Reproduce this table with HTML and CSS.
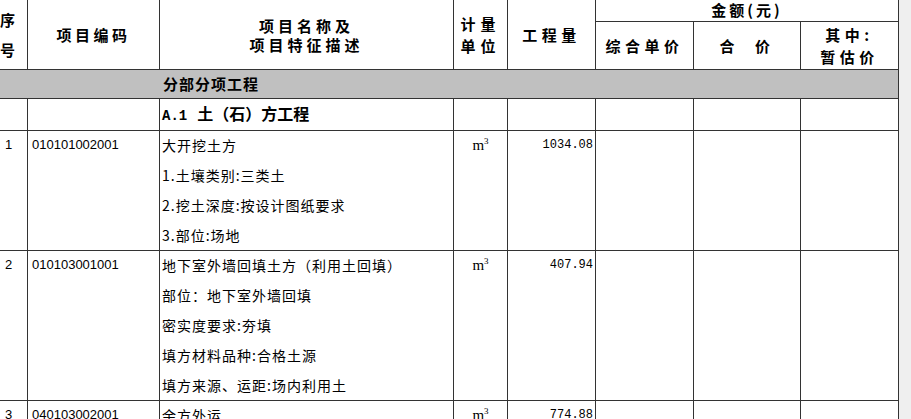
FILE: index.html
```html
<!DOCTYPE html>
<html lang="zh-CN">
<head>
<meta charset="utf-8">
<title>分部分项工程量清单</title>
<link rel="stylesheet" href="styles.css">
</head>
<body>
<div class="page">
  <div class="viewport">
    <table class="sheet">
      <colgroup>
        <col class="c-no"><col class="c-code"><col class="c-desc"><col class="c-unit">
        <col class="c-qty"><col class="c-price"><col class="c-total"><col class="c-est">
      </colgroup>
      <thead>
        <tr class="h1">
          <th rowspan="2" class="hd hd-no">序<br>号</th>
          <th rowspan="2" class="hd hd-code">项目编码</th>
          <th rowspan="2" class="hd hd-desc">项目名称及<br>项目特征描述</th>
          <th rowspan="2" class="hd hd-unit">计量<br>单位</th>
          <th rowspan="2" class="hd hd-qty">工程量</th>
          <th colspan="3" class="hd hd-money">金额(元)</th>
        </tr>
        <tr class="h2">
          <th class="hd hd-sub">综合单价</th>
          <th class="hd hd-sub">合&nbsp;&nbsp;价</th>
          <th class="hd hd-est">其中:<br>暂估价</th>
        </tr>
      </thead>
      <tbody>
        <tr class="r-group">
          <td colspan="8" class="group">分部分项工程</td>
        </tr>
        <tr class="r-sec">
          <td></td><td></td>
          <td class="sec"><span class="sec-code">A.1</span>土（石）方工程</td>
          <td></td><td></td><td></td><td></td><td></td>
        </tr>
        <tr class="r-item">
          <td class="no">1</td>
          <td class="code">010101002001</td>
          <td class="desc">
            <div class="ln">大开挖土方</div>
            <div class="ln">1.土壤类别:三类土</div>
            <div class="ln">2.挖土深度:按设计图纸要求</div>
            <div class="ln">3.部位:场地</div>
          </td>
          <td class="unit">m<sup>3</sup></td>
          <td class="qty">1034.08</td>
          <td></td><td></td><td></td>
        </tr>
        <tr class="r-item">
          <td class="no">2</td>
          <td class="code">010103001001</td>
          <td class="desc">
            <div class="ln">地下室外墙回填土方（利用土回填）</div>
            <div class="ln">部位：地下室外墙回填</div>
            <div class="ln">密实度要求:夯填</div>
            <div class="ln">填方材料品种:合格土源</div>
            <div class="ln">填方来源、运距:场内利用土</div>
          </td>
          <td class="unit">m<sup>3</sup></td>
          <td class="qty">407.94</td>
          <td></td><td></td><td></td>
        </tr>
        <tr class="r-item">
          <td class="no">3</td>
          <td class="code">040103002001</td>
          <td class="desc">
            <div class="ln">余方外运</div>
          </td>
          <td class="unit">m<sup>3</sup></td>
          <td class="qty">774.88</td>
          <td></td><td></td><td></td>
        </tr>
      </tbody>
    </table>
  </div>
  <div class="strip"></div>
</div>
</body>
</html>
```
FILE: styles.css
```css
html, body {
  margin: 0;
  padding: 0;
  background: #ffffff;
}

.page {
  display: flex;
  width: 911px;
  height: 419px;
  overflow: hidden;
}

.viewport {
  width: 899px;
  height: 419px;
  overflow: hidden;
  flex: none;
}

.strip {
  flex: 1;
  background: #efefef;
}

.sheet {
  border-collapse: collapse;
  table-layout: fixed;
  width: 899px;
  margin: -1px 0 0 -1px;
  font-family: "Noto Sans CJK SC", "Liberation Sans", sans-serif;
  color: #000;
}

.sheet th,
.sheet td {
  border: 1px solid #333;
  padding: 0;
}

.c-no { width: 28px; }
.c-code { width: 132px; }
.c-desc { width: 294px; }
.c-unit { width: 54px; }
.c-qty { width: 88px; }
.c-price { width: 98px; }
.c-total { width: 107px; }
.c-est { width: 98px; }

/* header */
.h1 { height: 22px; }
.h2 { height: 48px; }

.hd {
  font-weight: 700;
  font-size: 15px;
  text-align: center;
  vertical-align: middle;
  line-height: 20px;
}

.hd-no {
  text-align: left;
  padding-left: 2px;
  line-height: 30px;
  letter-spacing: 0;
}

.hd-code { letter-spacing: 3.5px; padding-left: 3px; }

.hd-desc {
  letter-spacing: 4px;
  line-height: 19px;
  padding-bottom: 4px;
  padding-left: 4px;
}

.hd-unit {
  letter-spacing: 5px;
  line-height: 22px;
  padding-bottom: 5px;
  padding-left: 5px;
}

.hd-qty { letter-spacing: 4.5px; padding-left: 4px; }

.hd-money {
  line-height: 20px;
  letter-spacing: 3px;
  padding-left: 3px;
  vertical-align: top;
}

.hd-sub {
  letter-spacing: 4.5px;
  padding-left: 4px;
}

.hd-est {
  letter-spacing: 4.5px;
  line-height: 22px;
  padding-left: 4px;
}

/* body rows */
.r-group { height: 29px; }
.r-sec { height: 29px; }

.group {
  background: #c0c0c0;
  font-weight: 700;
  font-size: 15px;
  letter-spacing: 1px;
  padding-left: 163px !important;
  vertical-align: middle;
  line-height: 28px;
}

.sec {
  font-weight: 700;
  font-size: 16px;
  padding-left: 2px !important;
  vertical-align: middle;
  line-height: 28px;
  white-space: nowrap;
}

.sec-code {
  font-family: "Liberation Mono", "DejaVu Sans Mono", monospace;
  font-size: 14px;
  font-weight: 700;
  margin-right: 10px;
}

.r-item td {
  vertical-align: top;
  line-height: 28px;
}

.no {
  font-family: "Liberation Sans", sans-serif;
  font-size: 13px;
  padding-left: 5px !important;
}

.code {
  font-family: "Liberation Sans", sans-serif;
  font-size: 13px;
  padding-left: 4px !important;
}

.desc {
  padding-left: 2px !important;
  font-size: 14px;
  letter-spacing: 1px;
}

.ln {
  height: 30px;
  line-height: 28px;
  white-space: nowrap;
}

.ln:last-child {
  height: 29px;
}

.unit {
  text-align: center;
  font-family: "Liberation Serif", serif;
  font-size: 15px;
}

.unit sup {
  font-size: 9px;
  line-height: 0;
  vertical-align: 6px;
}

.qty {
  text-align: right;
  font-family: "Liberation Mono", monospace;
  font-size: 12px;
  padding-right: 2px !important;
}
```
